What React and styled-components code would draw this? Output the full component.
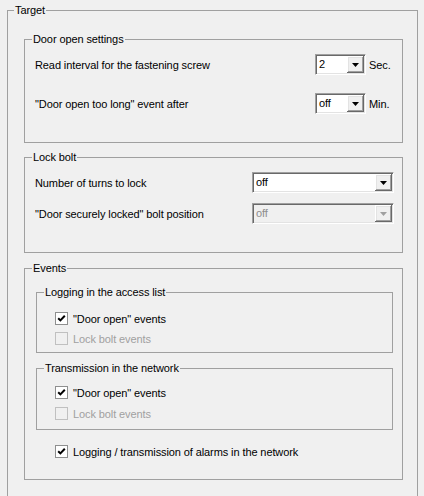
import React from 'react';
import styled, { createGlobalStyle } from 'styled-components';

const GlobalStyle = createGlobalStyle`
  html, body {
    margin: 0;
    padding: 0;
    background: #f0f0f0;
  }
  body {
    font-family: "Liberation Sans", Arial, sans-serif;
    font-size: 11px;
    letter-spacing: -0.1px;
    color: #000;
    overflow: hidden;
  }
`;

const Page = styled.div`
  width: 424px;
  height: 496px;
  box-sizing: border-box;
  padding: 4px 6px 0 7px;
  overflow: hidden;
`;

const Group = styled.fieldset`
  margin: ${p => p.$mt || 0}px 0 0 0;
  padding: 0;
  border: 1px solid #a0a0a0;
  min-width: 0;
`;

const Legend = styled.legend`
  margin-left: ${p => p.$ml || 7}px;
  padding: 0 1px;
  font-size: 11px;
  line-height: 13px;
`;

const GroupBody = styled.div`
  padding: ${p => p.$pad};
`;

const Row = styled.div`
  display: flex;
  align-items: center;
  height: 21px;
  margin-top: ${p => p.$mt || 0}px;
`;

const Label = styled.div`
  flex: 1;
  padding-top: 1px;
  white-space: nowrap;
`;

const Unit = styled.div`
  width: 26px;
  margin-left: 3px;
  padding-top: 1px;
`;

const ComboBox = styled.div`
  width: ${p => p.$w}px;
  height: 21px;
  box-sizing: border-box;
  display: flex;
  padding: 1px;
  border: 1px solid;
  border-color: #a0a0a0 #ffffff #ffffff #a0a0a0;
  box-shadow: inset 1px 1px 0 #696969, inset -1px -1px 0 #e3e3e3;
  background: ${p => (p.$disabled ? '#f0f0f0' : '#ffffff')};
`;

const ComboValue = styled.div`
  flex: 1;
  padding-left: 2px;
  line-height: 17px;
  color: ${p => (p.$disabled ? '#8d8d8d' : '#000')};
`;

const ComboButton = styled.div`
  width: 17px;
  height: 17px;
  display: flex;
  align-items: center;
  justify-content: center;
  background: #f0f0f0;
  box-shadow:
    inset -1px -1px 0 #696969,
    inset 1px 1px 0 #ffffff,
    inset -2px -2px 0 #a0a0a0,
    inset 2px 2px 0 #e3e3e3;
`;

const CheckRow = styled.div`
  display: flex;
  align-items: center;
  gap: 5px;
  height: 13px;
  margin-top: ${p => p.$mt || 0}px;
  margin-left: ${p => p.$ml || 0}px;
  color: ${p => (p.$disabled ? '#a0a0a0' : '#000')};
  white-space: nowrap;
`;

const Box = styled.div`
  width: 13px;
  height: 13px;
  box-sizing: border-box;
  border: 1px solid ${p => (p.$disabled ? '#c0c0c0' : '#8e8f8f')};
  background: ${p => (p.$disabled ? '#f0f0f0' : '#ffffff')};
  display: flex;
  align-items: center;
  justify-content: center;
`;

const Combo = ({ value, width, disabled }) => (
  <ComboBox $w={width} $disabled={disabled}>
    <ComboValue $disabled={disabled}>{value}</ComboValue>
    <ComboButton>
      <svg width="7" height="4" viewBox="0 0 7 4">
        <path d="M0 0H7L3.5 4Z" fill={disabled ? '#a0a0a0' : '#000'} />
      </svg>
    </ComboButton>
  </ComboBox>
);

const Check = ({ label, checked, disabled, mt, ml }) => (
  <CheckRow $disabled={disabled} $mt={mt} $ml={ml}>
    <Box $disabled={disabled}>
      {checked && (
        <svg width="11" height="11" viewBox="0 0 11 11">
          <path d="M2.2 5.2L4.4 7.4L8.8 2.8" fill="none" stroke="#000" strokeWidth="2" />
        </svg>
      )}
    </Box>
    <span>{label}</span>
  </CheckRow>
);

export default function App() {
  return (
    <>
      <GlobalStyle />
      <Page>
        <Group>
          <Legend $ml={6}>Target</Legend>
          <GroupBody $pad="16px 14px 60px 16px">
            <Group>
              <Legend>Door open settings</Legend>
              <GroupBody $pad="8px 7px 28px 10px">
                <Row>
                  <Label>Read interval for the fastening screw</Label>
                  <Combo value="2" width={51} />
                  <Unit>Sec.</Unit>
                </Row>
                <Row $mt={18}>
                  <Label>"Door open too long" event after</Label>
                  <Combo value="off" width={51} />
                  <Unit>Min.</Unit>
                </Row>
              </GroupBody>
            </Group>

            <Group $mt={8}>
              <Legend>Lock bolt</Legend>
              <GroupBody $pad="8px 8px 28px 10px">
                <Row>
                  <Label>Number of turns to lock</Label>
                  <Combo value="off" width={142} />
                </Row>
                <Row $mt={10}>
                  <Label>"Door securely locked" bolt position</Label>
                  <Combo value="off" width={142} disabled />
                </Row>
              </GroupBody>
            </Group>

            <Group $mt={9}>
              <Legend>Events</Legend>
              <GroupBody $pad="11px 9px 21px 11px">
                <Group>
                  <Legend>Logging in the access list</Legend>
                  <GroupBody $pad="13px 0 7px 18px">
                    <Check label={'"Door open" events'} checked />
                    <Check label="Lock bolt events" disabled mt={7} />
                  </GroupBody>
                </Group>
                <Group $mt={9}>
                  <Legend>Transmission in the network</Legend>
                  <GroupBody $pad="11px 0 9px 18px">
                    <Check label={'"Door open" events'} checked />
                    <Check label="Lock bolt events" disabled mt={8} />
                  </GroupBody>
                </Group>
                <Check
                  label="Logging / transmission of alarms in the network"
                  checked
                  mt={15}
                  ml={19}
                />
              </GroupBody>
            </Group>
          </GroupBody>
        </Group>
      </Page>
    </>
  );
}
